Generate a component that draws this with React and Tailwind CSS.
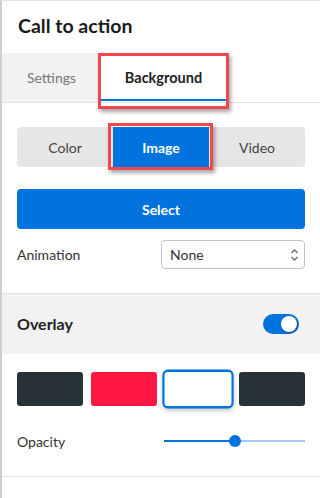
import React from 'react';

const swatches = ['#263238', '#ff1744', '#ffffff', '#263238'];

const Toggle = () => (
  <div className="relative w-9 h-5 rounded-full bg-[#0073de]">
    <div className="absolute right-[2px] top-[2px] w-4 h-4 rounded-full bg-white shadow-[1px_1px_2px_rgba(0,0,0,0.35)]" />
  </div>
);

const Slider = ({ value }) => (
  <div className="relative w-[141px] h-3 flex items-center">
    <div className="absolute left-0 right-0 h-[2px] bg-[#a3cbf2]" />
    <div className="absolute left-0 h-[2px] bg-[#0073de]" style={{ width: `${value}%` }} />
    <div
      className="absolute w-3 h-3 -ml-[6px] rounded-full bg-[#0073de]"
      style={{ left: `${value}%` }}
    />
  </div>
);

export default function App() {
  return (
    <div
      className="w-[320px] h-[498px] bg-white border-l-2 border-l-[#cfcfcf] border-t border-t-[#e4e4e4] text-[#333] overflow-hidden"
      style={{ fontFamily: 'Lato, "Open Sans", sans-serif' }}
    >
      {/* Header */}
      <div className="h-[52px] flex items-center px-4 pb-[2px]">
        <h1 className="text-[19.5px] font-bold text-[#1b1b1b]">Call to action</h1>
      </div>

      {/* Tabs */}
      <div className="flex h-[50px] border-b border-[#e2e2e2]">
        <div className="w-[99px] bg-[#f2f2f2] flex items-center justify-center text-[14px] text-[#777]">
          Settings
        </div>
        <div className="relative w-[125px] flex items-center justify-center text-[14.5px] font-bold text-[#222]">
          Background
          <div className="absolute left-0 right-0 bottom-[1px] h-[2px] bg-[#0073de]" />
          <div className="absolute -left-[3px] -right-[3px] top-0 -bottom-[7px] border-[3px] border-[#f2474d] shadow-[2px_3px_4px_rgba(0,0,0,0.35)]" />
        </div>
      </div>

      <div className="px-[15px]">
        {/* Segmented control */}
        <div className="mt-[24px] h-10 flex rounded bg-[#e6e6e6] text-[14px]">
          <div className="flex-1 flex items-center justify-center text-[#444]">Color</div>
          <div className="relative flex-1 flex items-center justify-center bg-[#0073de] text-white font-bold">
            Image
            <div className="absolute -left-[5px] -right-[4px] -top-[4px] -bottom-[3px] border-[3px] border-[#f2474d] shadow-[2px_3px_4px_rgba(0,0,0,0.35)]" />
          </div>
          <div className="flex-1 flex items-center justify-center text-[#444]">Video</div>
        </div>

        {/* Select button */}
        <button className="mt-[22px] w-full h-10 rounded bg-[#0073de] text-white text-[14px] font-bold">
          Select
        </button>

        {/* Animation */}
        <div className="mt-[11px] flex items-center justify-between">
          <span className="text-[14px] text-[#333]">Animation</span>
          <div className="w-[144px] h-[29px] border border-[#c4c4c4] rounded flex items-center justify-between pl-2 pr-[5px] text-[14px] text-[#333]">
            None
            <svg width="9" height="14" viewBox="0 0 9 14" fill="none" stroke="#666" strokeWidth="1.3">
              <path d="M1.5 5 L4.5 2 L7.5 5" />
              <path d="M1.5 9 L4.5 12 L7.5 9" />
            </svg>
          </div>
        </div>
      </div>

      {/* Overlay */}
      <div className="mt-[24px] h-[61px] border-t border-[#e2e2e2] bg-[#f2f2f2] flex items-center justify-between pl-[15px] pr-[21px]">
        <span className="text-[16px] font-bold text-[#222]">Overlay</span>
        <Toggle />
      </div>

      <div className="px-[15px] border-b border-[#e2e2e2] pb-[25px]">
        {/* Swatches */}
        <div className="mt-[18px] grid grid-cols-4 gap-2 h-[34px]">
          {swatches.map((c, i) => (
            <div
              key={i}
              className={
                i === 2
                  ? 'rounded-[5px] border-2 border-[#0073de] scale-x-[1.08] scale-y-[1.14] shadow-[0_2px_4px_rgba(0,0,0,0.2)]'
                  : 'rounded-[3px]'
              }
              style={{ backgroundColor: c }}
            />
          ))}
        </div>

        {/* Opacity */}
        <div className="mt-[25px] h-5 flex items-center justify-between">
          <span className="text-[14px] text-[#333]">Opacity</span>
          <Slider value={50} />
        </div>
      </div>
    </div>
  );
}
